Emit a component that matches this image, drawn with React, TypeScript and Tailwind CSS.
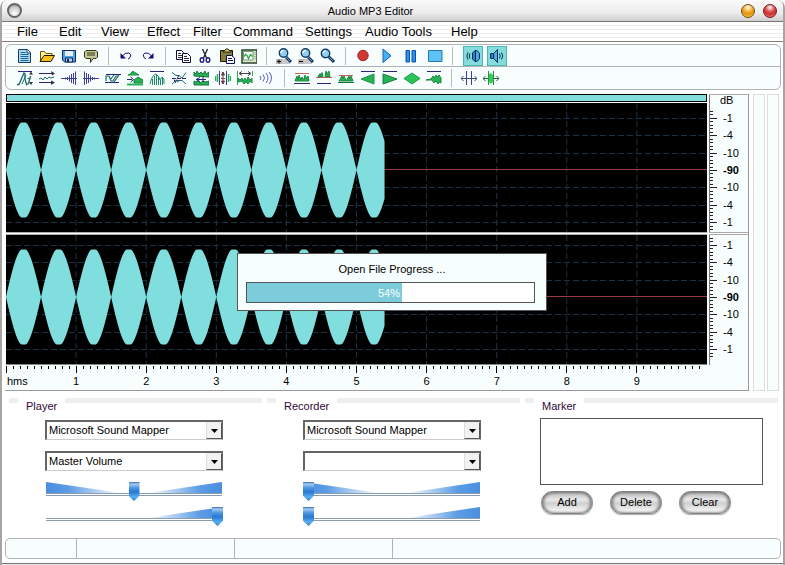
import { useState } from 'react';
import type { ReactNode } from 'react';

const MENUS = [
  { label: 'File', width: 'w-[42px]' },
  { label: 'Edit', width: 'w-[42px]' },
  { label: 'View', width: 'w-[46px]' },
  { label: 'Effect', width: 'w-[46px]' },
  { label: 'Filter', width: 'w-[40px]' },
  { label: 'Command', width: 'w-[72px]' },
  { label: 'Settings', width: 'w-[60px]' },
  { label: 'Audio Tools', width: 'w-[86px]' },
  { label: 'Help', width: 'w-[42px]' },
];

const NAVY = '#26267a';
const TEAL = '#1c6b6b';
const GREEN = '#27b254';

/* Magnifier shared by the three zoom buttons */
function Magnifier({ sign }: { sign?: '+' | '-' }) {
  return (
    <>
      {sign && (
        <>
          <path d="M0 11h6v5H0z" fill="#b8b8b8" />
          <path d="M6 11h8v5H6z" fill="#c8c8c8" />
          <path d="M1 13.500h4" stroke="#000" />
          {sign === '+' && <path d="M3 11.500v4" stroke="#000" />}
        </>
      )}
      <path d={sign ? 'M10 9l5 5' : 'M8 8l6 6'} stroke="#17335f" strokeWidth="3" />
      <path d={sign ? 'M10 9l4 4' : 'M8 8l5 5'} stroke="#5aa0cf" />
      <circle cx={sign ? 7.5 : 5.5} cy={sign ? 5 : 5.5} r="4.2" fill="#8fd0ee" stroke="#123a66" strokeWidth="1.4" />
      <path d={sign ? 'M5 5q0-2.500 2.500-2.500' : 'M3.500 5q0-2 2-2'} stroke="#fff" strokeWidth="1.500" fill="none" />
    </>
  );
}

const ICONS: Record<string, ReactNode> = {
  New: (
    <>
      <path d="M1.500 1.500h9l3 3v10h-12z" fill="#a8dcf5" stroke="#1b3a63" />
      <path d="M10 1.500v3.500h3.500" fill="#fff" stroke="#1b3a63" />
      <path d="M3.500 4.500h5M3.500 6.500h8M3.500 8.500h8M3.500 10.500h8M3.500 12.500h8" stroke="#1f6699" />
    </>
  ),
  Open: (
    <>
      <path d="M1.500 13V3.500h4l1.500 2h6V8" fill="#fff0a0" stroke="#6b5200" />
      <path d="M1 13.500l4-6h10.500l-3.500 6z" fill="#fcc01c" stroke="#1d1600" />
    </>
  ),
  Save: (
    <>
      <path d="M1.500 2.500h13v11.500h-11l-2-2z" fill="#4ba3e0" stroke="#0e2a66" />
      <path d="M4 3h8v5H4z" fill="#e6edf2" />
      <path d="M4.500 10h7v4h-7z" fill="#c6ced6" stroke="#0e2a66" />
      <path d="M6 11h2v3H6z" fill="#0e2a66" />
    </>
  ),
  Information: (
    <>
      <path d="M3 2.500h10l1.500 1.500v5l-1.500 1.500h-3l-2.500 4v-4H3L1.500 9V4z" fill="#c7c994" stroke="#33331c" />
      <path d="M4 5h8M4 7h8" stroke="#33331c" />
    </>
  ),
  Undo: (
    <>
      <path d="M4 8.500q3-4.500 7-3.500q3 1.500 1 4.500l-2 1.500" fill="none" stroke="#10107c" />
      <path d="M2.500 5v5.500H8z" fill="#10107c" />
    </>
  ),
  Redo: (
    <>
      <path d="M12 8.500q-3-4.500-7-3.500q-3 1.500-1 4.500l2 1.500" fill="none" stroke="#10107c" />
      <path d="M13.500 5v5.500H8z" fill="#10107c" />
    </>
  ),
  Copy: (
    <>
      <path d="M1.500 2.500h5l2 2v7h-7z" fill="#fff" stroke="#0c0c4c" />
      <path d="M3 5.500h3M3 7.500h4M3 9.500h4" stroke="#333" />
      <path d="M7.500 5.500h5l3 3v6h-8z" fill="#fff" stroke="#0c0c4c" />
      <path d="M9 8.500h3M9 10.500h5M9 12.500h5" stroke="#333" />
    </>
  ),
  Cut: (
    <>
      <path d="M5.500 1l4 9M10.500 1L6.500 10" stroke="#202020" strokeWidth="1.300" />
      <ellipse cx="5" cy="12" rx="1.800" ry="2.300" fill="none" stroke="#1a1a80" strokeWidth="1.400" />
      <ellipse cx="11" cy="12" rx="1.800" ry="2.300" fill="none" stroke="#1a1a80" strokeWidth="1.400" />
    </>
  ),
  Paste: (
    <>
      <path d="M1.500 2.500h12v11h-12z" fill="#84803c" stroke="#1c1a08" />
      <path d="M4 4V2.500h2l1-1.500h2l1 1.500h2V4z" fill="#e8e070" stroke="#1c1a08" />
      <path d="M7.500 7.500h5l3 2.500v5.500h-8z" fill="#fff" stroke="#0c0c5c" />
      <path d="M9 10.500h4M9 12.500h5" stroke="#0c0c5c" />
    </>
  ),
  Mix: (
    <>
      <path d="M1 2h15v13H1z" fill="#dfe8c8" stroke="#26402c" strokeWidth="1.500" />
      <path d="M2.500 3.500h9.500v8.500H2.500z" fill="#f6fff6" stroke="#7a9a7a" />
      <path d="M3 8.500l1.500-2 1.500 1 1.500 3 2-4 2 2" fill="none" stroke="#2fa34c" strokeWidth="1.300" />
      <path d="M14 4v7" stroke="#2fa34c" strokeDasharray="1 1" />
    </>
  ),
  'Zoom in': <Magnifier sign="+" />,
  'Zoom out': <Magnifier sign="-" />,
  'Zoom full': <Magnifier />,
  Record: <circle cx="8" cy="7.500" r="5.200" fill="#cf3a34" stroke="#9c2420" />,
  Play: <path d="M4 1v13.500l8-6.700z" fill="#42b0f2" stroke="#1263b8" />,
  Pause: <path d="M3 2.500h3.500v11.500H3zM9 2.500h3.500v11.500H9z" fill="#2c8fe8" stroke="#0d4fb0" />,
  Stop: <path d="M1.500 2.500h13.500v11h-13.500z" fill="#5cc4f4" stroke="#2673b8" />,
  'Left speaker': (
    <>
      <path d="M7.500 5l3-3v12l-3-3z" fill="#2c80c8" stroke="#083060" />
      <path d="M10.500 2.500h1.500l2.500 3v5l-2.500 3h-1.500z" fill="#4da6e0" stroke="#083060" />
      <path d="M5 5.500q-1.500 2.500 0 5M3 4.500q-2.500 3.500 0 7" fill="none" stroke="#083048" />
    </>
  ),
  'Right speaker': (
    <>
      <path d="M1.500 5.500h3v5h-3z" fill="#2c80c8" stroke="#083060" />
      <path d="M4.500 5.500l4-4v13l-4-4z" fill="#4da6e0" stroke="#083060" />
      <path d="M10.500 5.500q1.500 2.500 0 5M12.500 4.500q2.500 3.500 0 7" fill="none" stroke="#083048" />
    </>
  ),

  Amplify: (
    <>
      <path d="M1 1.500h14" stroke={NAVY} />
      <path d="M0 14.500h2L7 3l1 1v5l1.500 5.500 2-1L13.500 6" fill="none" stroke={TEAL} strokeWidth="1.300" />
      <path d="M5 14L9 5M10.500 8.500h3" stroke={TEAL} />
      <path d="M12 4.500h4l-2-3zM12 12h4l-2 3z" fill="#333" />
    </>
  ),
  Normalize: (
    <>
      <path d="M0 3.500h15M0 12.500h15" stroke={NAVY} />
      <path d="M0 9l2-1 2 2 2-3 2 2 2-2 2 1 3-1" fill="none" stroke={TEAL} />
      <path d="M12 1l4 2.500-3 2zM12 10.500l4 2-4 2.500z" fill="#333" />
    </>
  ),
  'Fade in': (
    <path d="M0 8.500h16M4.500 7.500v2M6.500 7v3M8.500 5.500v6M10.500 4v9M12.500 3v11M14.500 1.500v13.500" stroke="#3c3c9c" />
  ),
  'Fade out': (
    <path d="M0 8.500h16M1.500 1.500v13.500M3.500 3v11M5.500 4v9M7.500 5.500v6M9.500 7v3M11.500 7.500v2" stroke="#3c3c9c" />
  ),
  Invert: (
    <>
      <path d="M1 4.500h15M0 12.500h14" stroke={NAVY} />
      <path d="M1 11V6h3l2 5h2l3-5h2M5 10l4-5M9 12l5-7" fill="none" stroke={TEAL} strokeWidth="1.200" />
    </>
  ),
  Delay: (
    <>
      <path d="M1 5q3-1 4-3q1-1.500 2 0q2 1 5 3zM7 10l4-3 5 3v3H7z" fill={GREEN} stroke="#1b8a40" />
      <path d="M0 14.500h16" stroke={GREEN} strokeWidth="2" />
      <path d="M0 9.500h5M3.500 7l3 2.500-3 2.500" fill="none" stroke={NAVY} />
    </>
  ),
  Envelope: (
    <>
      <path d="M1 1.500h14" stroke={NAVY} />
      <path d="M1 14q2-9 6-10q3 2 4 6l2-3 2 2v5" fill="none" stroke="#1b8a60" />
      <path d="M3.500 9v6M5.500 6v9M7.500 5v10M9.500 6v9M11.500 10v5M13.500 8v7" stroke="#1b8a60" />
    </>
  ),
  Silence: (
    <>
      <path d="M1 2.500l4 3h3l3 2.500 4-5.500M1 14l4-3.500h6L15 14" fill="none" stroke={TEAL} />
      <path d="M8 5L4.500 12M3 9.500l1.500 3 3-1M1 8.500h14" fill="none" stroke={NAVY} strokeDasharray="4 1" />
    </>
  ),
  Compress: (
    <>
      <path d="M1 6V2l2 2 1-3 2 3 2-2 2 2 2-3 1 3 3-2v5z" fill={GREEN} stroke="#14733a" />
      <path d="M1 11l2 1 2-1 2 2 3-2 3 1 3-1v4H1z" fill={GREEN} stroke="#14733a" />
      <path d="M3 9.500h10M7 7.500l-4 2 4 2M10 6v6" fill="none" stroke={NAVY} />
    </>
  ),
  Stretch: (
    <>
      <path d="M4.500 1v14M11.500 1v14" stroke="#3c3c9c" />
      <path d="M8 2v12M6.500 5L8 2l1.500 3zM6.500 11L8 14l1.500-3zM6 8.500h4" fill="#333" stroke="#704040" />
      <path d="M.5 6v5M2.500 4v8M13.500 4v8M15.500 6v5" stroke={GREEN} strokeWidth="1.500" />
    </>
  ),
  Pitch: (
    <>
      <path d="M.5 1v14M15.500 1v5" stroke={GREEN} />
      <path d="M3 3.500h10M5 1.500l-3 2 3 2M11 1.500l3 2-3 2" fill="none" stroke="#444" />
      <path d="M1 12V8l2 2 2-2 1 3 2-3 2 3 1-4 2 3 2-2v5l-2-2-2 3-2-2-2 2-2-3z" fill={GREEN} stroke="#1b8a40" />
    </>
  ),
  Reverb: (
    <path d="M1 6q2 2 0 4M4 4.500q3 3.500 0 7M7 3q4 5 0 10M10 2q5 6 0 12" fill="none" stroke="#5c5cb4" />
  ),
  'Band pass': (
    <>
      <path d="M1 3.500h14" stroke="#c06858" />
      <path d="M1 11l2-5 1 4 1-5 2 5 1-3 2 3 1-5 2 4 1-3 1 5z" fill={GREEN} stroke="#1b8a40" />
      <path d="M0 13.500h16" stroke={NAVY} />
    </>
  ),
  'High pass': (
    <>
      <path d="M2 6.500l2-3 1 2 1-3 1 4zM9 6.500l1-5.500 1 3 2-3 1 5.500z" fill={GREEN} stroke="#1b8a40" />
      <path d="M0 7.500h16" stroke="#b06050" />
      <path d="M1 13.500h14" stroke={NAVY} />
    </>
  ),
  'Low pass': (
    <>
      <path d="M1 5.500h14" stroke="#c06858" />
      <path d="M1 11l3-5 1 3 1-3 2 5zM8 11l3-5 1 3 1-3 2 5z" fill={GREEN} stroke="#1b8a40" />
      <path d="M0 12.500h16" stroke="#14733a" />
    </>
  ),
  'Slide left': (
    <>
      <path d="M1 1.500h14" stroke={NAVY} />
      <path d="M1 9l13-5v10z" fill={GREEN} stroke="#1b9a48" />
    </>
  ),
  'Slide right': (
    <>
      <path d="M1 1.500h14" stroke={NAVY} />
      <path d="M1 4l14 5-14 5z" fill={GREEN} stroke="#1b7a48" />
    </>
  ),
  'Slide both': <path d="M0 8.500l8-5.500 8 5.500-8 5.500z" fill="#2cc458" stroke="#1b9a48" />,
  'Noise gate': (
    <>
      <path d="M1 1.500h14" stroke={NAVY} />
      <path d="M0 10l5-1 2-3 1 2 2-3 1 2 2-2 2 3v5l-2-1-1 2-2-3-2 2-2-3z" fill={GREEN} stroke="#1b8a40" />
    </>
  ),
  'Trim outside': (
    <>
      <path d="M5.500 1v14M10.500 1v14" stroke="#3c3c9c" />
      <path d="M0 8.500h16M2.500 6L0 8.500 2.500 11M13.500 6L16 8.500 13.500 11" fill="none" stroke="#3c4c6c" />
    </>
  ),
  'Trim selection': (
    <>
      <path d="M5.500 1v14M10.500 1v14" stroke="#2c8a50" />
      <path d="M6 4l2-1 2 2v7l-2 2-2-2z" fill="#2fd04c" />
      <path d="M0 8.500h5M11 8.500h5M2.500 6L0 8.500 2.500 11M13.500 6L16 8.500 13.500 11" fill="none" stroke="#2c5c40" />
    </>
  ),
};

const FILE_ROW = [
  ['New', 'Open', 'Save', 'Information'],
  ['Undo', 'Redo'],
  ['Copy', 'Cut', 'Paste', 'Mix'],
  ['Zoom in', 'Zoom out', 'Zoom full'],
];

const TRANSPORT = ['Record', 'Play', 'Pause', 'Stop'];

const EFFECT_ROW = [
  ['Amplify', 'Normalize', 'Fade in', 'Fade out', 'Invert', 'Delay', 'Envelope', 'Silence', 'Compress', 'Stretch', 'Pitch', 'Reverb'],
  ['Band pass', 'High pass', 'Low pass', 'Slide left', 'Slide right', 'Slide both', 'Noise gate'],
  ['Trim outside', 'Trim selection'],
];

function ToolButton({ name, pressed }: { name: string; pressed?: boolean }) {
  return (
    <button
      aria-label={name}
      title={name}
      className={
        pressed
          ? 'flex h-5 w-5 items-center justify-center border border-[#4fb4b4] bg-[#84dcdc]'
          : 'flex h-5 w-[22px] items-center justify-center hover:bg-[#d8f4f4]'
      }
    >
      <svg viewBox="0 0 16 16" className="h-4 w-4 shrink-0">
        {ICONS[name]}
      </svg>
    </button>
  );
}

function Separator() {
  return (
    <div className="flex w-[13px] justify-center">
      <div className="h-[18px] w-px bg-[#b4bcbc]" />
    </div>
  );
}

function ToolGroups({ groups }: { groups: string[][] }) {
  return (
    <>
      {groups.map((group, i) => (
        <div key={group[0]} className="flex items-center">
          {i > 0 && <Separator />}
          {group.map((name) => (
            <ToolButton key={name} name={name} />
          ))}
        </div>
      ))}
    </>
  );
}

/* Waveform chart */

const LEVELS = [-52, -35, -17, 0, 17, 35, 52];
const SECONDS = [1, 2, 3, 4, 5, 6, 7, 8, 9];
const LOADED = 540;

function wavePoints(center: number) {
  const top: string[] = [];
  const bottom: string[] = [];
  for (let x = 0; x <= LOADED; x += 2) {
    const amp = Math.min(47.5, 49 * Math.abs(Math.sin((x / 50) * Math.PI)));
    top.push(`${x},${center - amp}`);
    bottom.unshift(`${x},${center + amp}`);
  }
  return [...top, ...bottom].join(' ');
}

function Channel({ center, label }: { center: number; label: string }) {
  return (
    <svg role="img" aria-label={label} className="block h-[129px] w-full bg-black">
      {LEVELS.filter((dy) => dy !== 0).map((dy) => (
        <line key={dy} x1="0" x2="100%" y1={center + dy + 0.5} y2={center + dy + 0.5} stroke="#1c3144" strokeDasharray="6 3" />
      ))}
      {SECONDS.map((s) => (
        <line key={s} x1={`${s * 10}%`} x2={`${s * 10}%`} y1="0" y2="100%" stroke="#1c3144" strokeDasharray="6 3" />
      ))}
      <rect x="54%" y={center - 1} width="46%" height="1" fill="#983c48" />
      <svg viewBox="0 0 1000 129" preserveAspectRatio="none" width="100%" height="129">
        <polygon points={wavePoints(center)} fill="#80dede" />
      </svg>
    </svg>
  );
}

function TimeRuler() {
  const ticks = Array.from({ length: 100 }, (_, i) => i);
  return (
    <svg role="img" aria-label="Time ruler" className="block h-[26px] w-full border-t border-[#888]">
      {ticks.map((i) => (
        <line key={i} x1={`${i}%`} x2={`${i}%`} y1="1" y2={i % 10 === 0 ? 8 : 4} stroke="#000" shapeRendering="crispEdges" />
      ))}
      <text x="1" y="20" fontSize="11">
        hms
      </text>
      {SECONDS.map((s) => (
        <text key={s} x={`${s * 10}%`} y="20" fontSize="11" textAnchor="middle">
          {s}
        </text>
      ))}
    </svg>
  );
}

const DB_MARKS = ['-1', '-4', '-10', '-90', '-10', '-4', '-1'];

function DecibelScale() {
  const minor = Array.from({ length: 35 }, (_, i) => Math.round((i - 17) * 3.47));
  return (
    <svg role="img" aria-label="Decibel scale" className="block h-[270px] w-[39px]">
      <text x="11" y="9" fontSize="11">
        dB
      </text>
      <line x1="0.5" x2="0.5" y1="0" y2="270" stroke="#777" />
      {[75, 202].map((center) => (
        <g key={center}>
          {minor.map((dy) => (
            <line key={dy} x1="1" x2="4" y1={center + dy + 0.5} y2={center + dy + 0.5} stroke="#222" />
          ))}
          {DB_MARKS.map((mark, i) => (
            <g key={i}>
              <line x1="1" x2="8" y1={center + LEVELS[i] + 0.5} y2={center + LEVELS[i] + 0.5} stroke="#222" />
              <text x="14" y={center + LEVELS[i] + 4} fontSize="11" fontWeight={mark === '-90' ? 700 : 400}>
                {mark}
              </text>
            </g>
          ))}
        </g>
      ))}
      <rect x="0" y="137" width="39" height="3" fill="#fff" />
      <path d="M0 137.500h39M0 139.500h39" stroke="#aaa" />
    </svg>
  );
}

function ProgressDialog({ percent }: { percent: number }) {
  return (
    <div
      role="dialog"
      aria-label="Open File Progress"
      className="absolute top-[159px] left-1/2 flex w-[310px] -translate-x-1/2 flex-col border border-[#555] bg-[#f7fefe] px-2 pt-2 pb-[7px]"
    >
      <p className="text-center leading-[14px]">Open File Progress ...</p>
      <div
        role="progressbar"
        aria-label="Open File Progress"
        aria-valuenow={percent}
        className="mt-1.5 mr-[3px] h-[21px] border border-[#555] bg-white"
      >
        <div className="h-full bg-[#7cccdc] pr-0.5 text-right leading-5 text-white" style={{ width: `${percent}%` }}>
          {percent}%
        </div>
      </div>
    </div>
  );
}

/* Bottom panels */

function Group({ title, children }: { title: string; children: ReactNode }) {
  return (
    <section>
      <div className="flex items-start">
        <div className="h-[5px] w-[9px] bg-[#efefef]" />
        <h2 className="px-2 pt-px leading-[14px] text-[#300838]">{title}</h2>
        <div className="h-[5px] flex-1 bg-[#efefef]" />
      </div>
      {children}
    </section>
  );
}

function DeviceSelect({ label, value }: { label: string; value: string }) {
  return (
    <div className="relative flex h-5 w-[178px] items-center border-t-2 border-r border-b border-l-2 border-t-[#666] border-r-[#666] border-b-[#ccc] border-l-[#666] bg-white">
      <select
        aria-label={label}
        defaultValue={value}
        className="h-[17px] w-full appearance-none bg-transparent pl-0.5 leading-[17px] outline-none"
      >
        <option>{value}</option>
      </select>
      <span className="pointer-events-none absolute top-0 right-0 flex h-[17px] w-4 items-center justify-center border border-t-[#eee] border-r-[#555] border-b-[#555] border-l-[#ddd] bg-[#f2f2f2]">
        <svg viewBox="0 0 7 4" className="h-1 w-[7px]">
          <path d="M0 0h7L3.500 4z" />
        </svg>
      </span>
    </div>
  );
}

function VolumeSlider({ label, initial, balance }: { label: string; initial: number; balance?: boolean }) {
  const [value, setValue] = useState(initial);
  return (
    <div className="relative h-[19px] w-[178px]">
      <svg viewBox="0 0 178 19" className="absolute inset-0 h-full w-full">
        <defs>
          <linearGradient id="wedge-right">
            <stop offset="0" stopColor="#fff" />
            <stop offset="0.7" stopColor="#5c9ce4" />
            <stop offset="1" stopColor="#4a8ee0" />
          </linearGradient>
          <linearGradient id="wedge-left">
            <stop offset="0" stopColor="#4a8ee0" />
            <stop offset="0.3" stopColor="#5c9ce4" />
            <stop offset="1" stopColor="#fff" />
          </linearGradient>
        </defs>
        {balance && <path d="M1 0L76 11H1z" fill="url(#wedge-left)" />}
        <path d="M103 11L177 0v11z" fill="url(#wedge-right)" />
        <path d="M1 11.500h176M1 13.500h176" stroke="#8c9cb0" />
      </svg>
      <input
        type="range"
        aria-label={label}
        value={value}
        onChange={(e) => setValue(Number(e.target.value))}
        className="absolute inset-0 h-full w-full appearance-none bg-transparent [&::-webkit-slider-thumb]:h-[19px] [&::-webkit-slider-thumb]:w-[11px] [&::-webkit-slider-thumb]:appearance-none [&::-webkit-slider-thumb]:bg-[linear-gradient(#3468ac_0,#a4ccf4_2px,#4c94e0_6px,#2878d0_10px,#58b0f0_15px,#2c7cc8)] [&::-webkit-slider-thumb]:[clip-path:polygon(0_0,100%_0,100%_72%,50%_100%,0_72%)]"
      />
    </div>
  );
}

function PillButton({ children }: { children: ReactNode }) {
  return (
    <button className="h-[23px] w-[52px] rounded-full border border-[#808080] bg-[linear-gradient(#b4b4b4,#e8e8e8_35%,#d0d0d0_55%,#fff)] text-black shadow-[inset_2px_0_3px_#888,inset_-2px_0_3px_#888,inset_0_1px_2px_#888,0_1px_1px_#aaa]">
      {children}
    </button>
  );
}

export default function App() {
  return (
    <div className="flex min-h-screen flex-col rounded-t-lg border-x-2 border-[#a8a4a4] bg-white font-['Liberation_Sans',Arial,sans-serif] text-[11px] text-black">
      <header className="flex h-[22px] items-center rounded-t-md border-b border-[#777] bg-[linear-gradient(#fafafa,#ececec_60%,#d0d0d0)] pr-[6px] pl-[5px]">
        <button
          aria-label="Window menu"
          className="h-[15px] w-[15px] rounded-full border-2 border-[#666] bg-[radial-gradient(circle_at_50%_75%,#fff,#ccc_60%,#888)]"
        />
        <h1 className="flex-1 pr-[22px] text-center leading-[20px]">Audio MP3 Editor</h1>
        <div className="flex gap-2">
          <button
            aria-label="Minimize"
            className="h-3.5 w-3.5 rounded-full border border-[#7a4a10] bg-[radial-gradient(circle_at_50%_20%,#fff_0,#f4b840_35%,#e09010_60%,#ffe860)]"
          />
          <button
            aria-label="Close"
            className="h-3.5 w-3.5 rounded-full border border-[#701818] bg-[radial-gradient(circle_at_50%_20%,#fff_0,#e06060_35%,#c82c2c_60%,#ff9890)]"
          />
        </div>
      </header>

      <nav className="flex h-5 items-end border-b border-[#808078] bg-[repeating-linear-gradient(#fff_0,#fff_3px,#eee_3px,#eee_4px)] pl-[15px] text-[13px]">
        {MENUS.map((menu) => (
          <button key={menu.label} className={`text-left leading-[18px] ${menu.width}`}>
            {menu.label}
          </button>
        ))}
      </nav>

      <div className="mt-0.5 mr-0.5 ml-[3px] rounded-md border border-[#b0b4b4] bg-[#f8fefe]">
        <div className="flex h-[22px] items-center border-b border-[#b0b4b4] pl-2">
          <ToolGroups groups={FILE_ROW} />
          <Separator />
          <div className="flex gap-0.5">
            {TRANSPORT.map((name) => (
              <ToolButton key={name} name={name} />
            ))}
          </div>
          <Separator />
          <div className="flex gap-1 pl-1">
            <ToolButton name="Left speaker" pressed />
            <ToolButton name="Right speaker" pressed />
          </div>
        </div>
        <div className="flex h-[22px] items-center pl-2">
          <ToolGroups groups={EFFECT_ROW} />
        </div>
      </div>

      <main className="relative mt-1 mr-1 ml-[3px] flex">
        <div className="flex flex-1 border-r border-b border-[#999] bg-[#f8fefe]">
          <div className="flex-1 pl-px">
            <div className="h-2 border border-black bg-[#84dcdc]" />
            <div className="mt-px">
              <Channel center={67} label="Left channel" />
              <div className="h-[3px] border-y border-[#aaa] bg-white" />
              <Channel center={62} label="Right channel" />
            </div>
            <TimeRuler />
          </div>
          <div className="ml-0.5 border-t border-[#aaa]">
            <DecibelScale />
          </div>
        </div>
        <div className="ml-1 flex gap-0.5">
          <div className="w-3 border border-[#dcdcdc] bg-[#f8fefe]" />
          <div className="w-3 border border-[#dcdcdc] bg-[#f8fefe]" />
        </div>
        <ProgressDialog percent={54} />
      </main>

      <div className="mt-[7px] grid flex-1 grid-cols-3 gap-[5px] pr-[5px] pl-[7px]">
        <Group title="Player">
          <div className="flex flex-col pt-[7px] pl-9">
            <DeviceSelect label="Playback device" value="Microsoft Sound Mapper" />
            <div className="mt-[11px]">
              <DeviceSelect label="Playback line" value="Master Volume" />
            </div>
            <div className="mt-[11px] flex flex-col gap-1.5">
              <VolumeSlider label="Playback balance" initial={50} balance />
              <VolumeSlider label="Playback volume" initial={100} />
            </div>
          </div>
        </Group>
        <Group title="Recorder">
          <div className="flex flex-col pt-[7px] pl-9">
            <DeviceSelect label="Recording device" value="Microsoft Sound Mapper" />
            <div className="mt-[11px]">
              <DeviceSelect label="Recording line" value="" />
            </div>
            <div className="mt-[11px] flex flex-col gap-1.5">
              <VolumeSlider label="Recording balance" initial={0} balance />
              <VolumeSlider label="Recording volume" initial={0} />
            </div>
          </div>
        </Group>
        <Group title="Marker">
          <div className="pt-[5px] pr-[15px] pl-[15px]">
            <select size={4} aria-label="Markers" className="block h-[67px] w-full border border-[#555] bg-white outline-none" />
            <div className="mt-1.5 flex gap-[17px] pl-px">
              <PillButton>Add</PillButton>
              <PillButton>Delete</PillButton>
              <PillButton>Clear</PillButton>
            </div>
          </div>
        </Group>
      </div>

      <footer className="mr-0.5 mb-1 ml-[3px] flex h-[21px] rounded-[5px] border border-[#b0b4b4] bg-[#f8fefe]">
        <div className="w-[71px] border-r border-[#b0b4b4]" />
        <div className="w-[158px] border-r border-[#b0b4b4]" />
        <div className="w-[158px] border-r border-[#b0b4b4]" />
        <div className="flex-1" />
      </footer>
      <div className="h-0.5 border-t border-[#777] bg-[#e8e4ec]" />
    </div>
  );
}
